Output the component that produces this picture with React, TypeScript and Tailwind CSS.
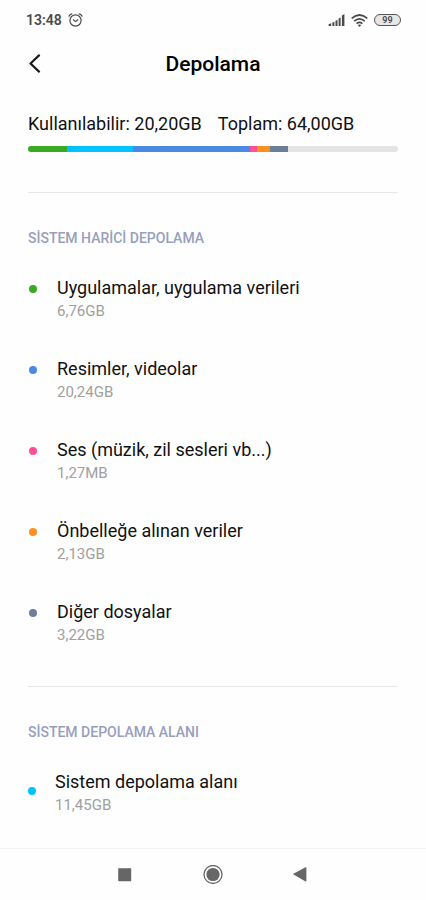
type Segment = { name: string; share: number; color: string };
type Entry = { title: string; size: string; color: string };

// Share of the whole bar, in tenths of a percent.
const segments: Segment[] = [
  { name: "Uygulamalar", share: 106, color: "bg-[#3aaa22]" },
  { name: "Sistem", share: 178, color: "bg-[#00c3ff]" },
  { name: "Resimler", share: 316, color: "bg-[#4a8ae4]" },
  { name: "Ses", share: 19, color: "bg-[#ff4f93]" },
  { name: "Önbellek", share: 34, color: "bg-[#fb9022]" },
  { name: "Diğer", share: 50, color: "bg-[#6b7f99]" },
];

const userEntries: Entry[] = [
  { title: "Uygulamalar, uygulama verileri", size: "6,76GB", color: "bg-[#3aaa22]" },
  { title: "Resimler, videolar", size: "20,24GB", color: "bg-[#4a8ae4]" },
  { title: "Ses (müzik, zil sesleri vb...)", size: "1,27MB", color: "bg-[#ff4f93]" },
  { title: "Önbelleğe alınan veriler", size: "2,13GB", color: "bg-[#fb9022]" },
  { title: "Diğer dosyalar", size: "3,22GB", color: "bg-[#6b7f99]" },
];

function StatusBar() {
  return (
    <div className="flex h-10 items-center justify-between pr-[25px] pl-[26px] text-[#4a4a4a]">
      <div className="flex items-center gap-[6px]">
        <span className="text-sm leading-5 font-semibold">13:48</span>
        <svg width="15" height="14" viewBox="0 0 15 14" fill="none" stroke="currentColor" strokeWidth="1.2" strokeLinecap="round" strokeLinejoin="round" aria-hidden="true">
          <circle cx="7.5" cy="7.5" r="5.6" />
          <path d="M5.4 6.8l2.1 1.8 2.3-1.8M1 3.2Q1.6 1.4 3.8.9M14 3.2Q13.4 1.4 11.2.9" />
        </svg>
      </div>
      <div className="flex items-center gap-[6px]">
        <svg width="17" height="12" viewBox="0 0 17 12" fill="currentColor" aria-hidden="true">
          <path d="M.6 12v-1.8l2.6-1V12zM4.4 8.5l2-.8V12h-2zM7.5 6.8l2-.9V12h-2zM10.6 4.6l2-1V12h-2zM13.9 1.6L16.4 0v12h-2.5z" />
        </svg>
        <svg width="17" height="13" viewBox="0 0 17 13" fill="none" stroke="currentColor" strokeWidth="1.7" aria-hidden="true">
          <path d="M.7 4.4Q8.5-2.4 16.3 4.4M3.2 7.1Q8.5 2.5 13.8 7.1M5.6 9.6Q8.5 7.2 11.4 9.6" />
          <path d="M6.8 11.1Q8.5 9.9 10.2 11.1L8.5 13z" fill="currentColor" stroke="none" />
        </svg>
        <span className="flex h-3 w-[27px] items-center justify-center rounded-full border border-[#555] bg-[#e6e6e6] text-[9px] leading-none font-semibold">
          99
        </span>
      </div>
    </div>
  );
}

function EntryRow({ entry, system = false }: { entry: Entry; system?: boolean }) {
  return (
    <li className={system ? "flex gap-[19px]" : "flex gap-5 pl-px"}>
      <span className={`size-2 shrink-0 rounded-full ${system ? "mt-[17px]" : "mt-[9px]"} ${entry.color}`} />
      <div>
        <p className="text-lg leading-6 text-[#111]">{entry.title}</p>
        <p className="text-[15px] leading-[22px] text-[#a0a0a0]">{entry.size}</p>
      </div>
    </li>
  );
}

function Section({ title, entries, system = false }: { title: string; entries: Entry[]; system?: boolean }) {
  return (
    <section className="border-t border-[#e8e8e8] pt-[35px]">
      <h2 className="text-sm leading-5 font-medium text-[#979fbd]">{title}</h2>
      <ul className="mt-7 flex flex-col gap-[35px]">
        {entries.map((entry) => (
          <EntryRow key={entry.title} entry={entry} system={system} />
        ))}
      </ul>
    </section>
  );
}

export default function App() {
  return (
    <div className="flex min-h-screen flex-col bg-[#fefefe] font-['Roboto',sans-serif]">
      <StatusBar />
      <header className="grid h-12 grid-cols-[1fr_auto_1fr] items-center px-7">
        <button type="button" aria-label="Geri" className="flex h-10 w-10 items-center text-[#1a1a1a]">
          <svg width="13" height="20" viewBox="0 0 13 20" fill="none" stroke="currentColor" strokeWidth="2.2" strokeLinecap="round" strokeLinejoin="round" aria-hidden="true">
            <path d="M11 1.4L2.5 9.5L11 17.6" />
          </svg>
        </button>
        <h1 className="text-[21px] leading-7 font-medium text-black">Depolama</h1>
      </header>
      <main className="flex flex-1 flex-col gap-10 px-7 pt-6 pb-7">
        <div>
          <div className="flex gap-4 text-lg leading-6 text-[#111]">
            <p>Kullanılabilir: 20,20GB</p>
            <p>Toplam: 64,00GB</p>
          </div>
          <div className="mt-[10px] flex h-[6px] overflow-hidden rounded-full bg-[#e4e4e4]">
            {segments.map((s) => (
              <div key={s.name} className={s.color} style={{ width: `${s.share / 10}%` }} />
            ))}
          </div>
        </div>
        <Section title="SİSTEM HARİCİ DEPOLAMA" entries={userEntries} />
        <Section
          title="SİSTEM DEPOLAMA ALANI"
          entries={[{ title: "Sistem depolama alanı", size: "11,45GB", color: "bg-[#00c3ff]" }]}
          system
        />
      </main>
      <nav className="flex h-[52px] items-center justify-center gap-16 border-t border-[#f3f3f3] text-[#666]">
        <button type="button" aria-label="Son uygulamalar" className="flex h-6 w-6 items-center justify-center">
          <svg width="14" height="14" viewBox="0 0 14 14" fill="currentColor" aria-hidden="true">
            <rect x=".2" y=".2" width="13" height="13" rx=".6" />
          </svg>
        </button>
        <button type="button" aria-label="Ana ekran" className="flex h-6 w-6 items-center justify-center">
          <svg width="20" height="20" viewBox="0 0 20 20" fill="none" stroke="currentColor" aria-hidden="true">
            <circle cx="10" cy="9.5" r="9" strokeWidth="1.3" />
            <circle cx="10" cy="9.5" r="6.6" fill="currentColor" stroke="none" />
          </svg>
        </button>
        <button type="button" aria-label="Geri dön" className="flex h-6 w-6 items-center justify-center">
          <svg width="16" height="15" viewBox="0 0 16 15" fill="currentColor" aria-hidden="true">
            <path d="M.4 6.8Q.2 7.2.6 7.6L12.6 14.4Q13.4 14.7 13.4 13.8V.8Q13.4-.1 12.6.2z" />
          </svg>
        </button>
      </nav>
    </div>
  );
}
